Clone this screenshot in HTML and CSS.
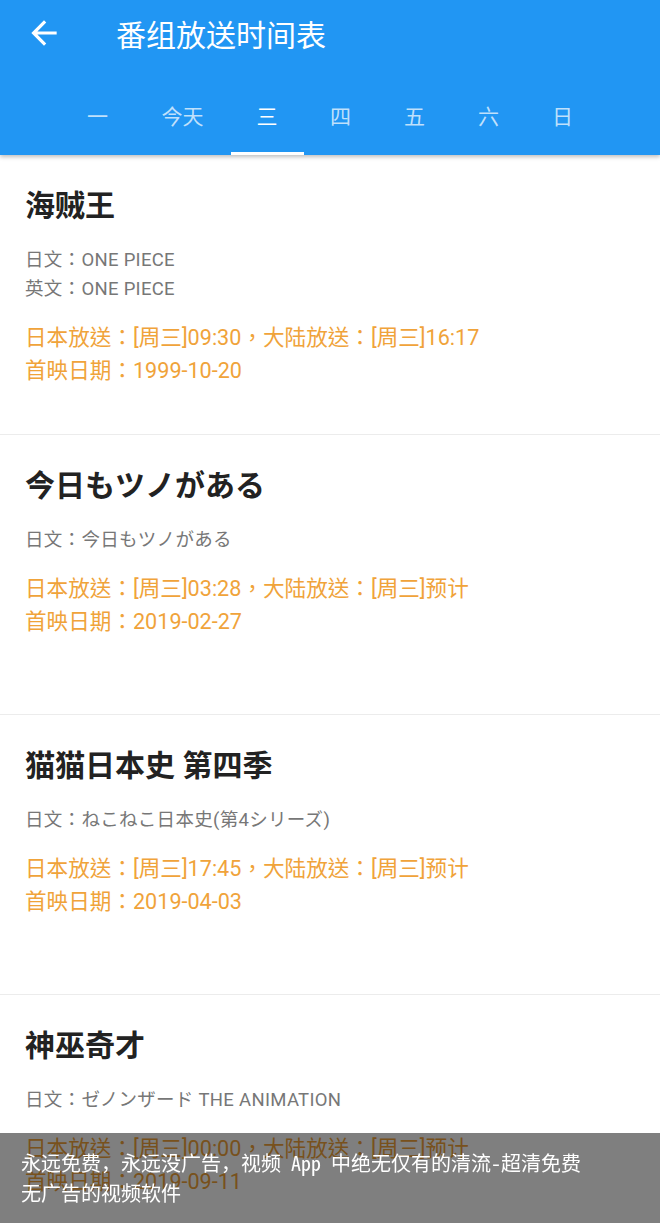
FILE: index.html
```html
<!DOCTYPE HTML>
<html>
<head>
<meta charset="utf-8">
<title>番组放送时间表</title>
<link rel="stylesheet" href="styles.css">
</head>
<body>

<div id="top_bar">
	<div class="toolbar">
		<svg class="back_icon" viewBox="0 0 24 24" width="38" height="38"><path fill="#ffffff" d="M20 11H7.830l5.590-5.590L12 4l-8 8 8 8 1.410-1.410L7.830 13H20v-2z"/></svg>
		<p class="toolbar_title">番组放送时间表</p>
	</div>
	<div class="tabs">
		<div class="tab">一</div>
		<div class="tab tab_wide">今天</div>
		<div class="tab tab_selected">三</div>
		<div class="tab">四</div>
		<div class="tab">五</div>
		<div class="tab">六</div>
		<div class="tab">日</div>
	</div>
</div>

<div id="list">
	<div class="show">
		<h2 class="show_title">海贼王</h2>
		<div class="show_names">
			<p>日文：ONE PIECE</p>
			<p>英文：ONE PIECE</p>
		</div>
		<div class="show_times">
			<p>日本放送：[周三]09:30，大陆放送：[周三]16:17</p>
			<p>首映日期：1999-10-20</p>
		</div>
	</div>
	<div class="show">
		<h2 class="show_title">今日もツノがある</h2>
		<div class="show_names">
			<p>日文：今日もツノがある</p>
		</div>
		<div class="show_times">
			<p>日本放送：[周三]03:28，大陆放送：[周三]预计</p>
			<p>首映日期：2019-02-27</p>
		</div>
	</div>
	<div class="show">
		<h2 class="show_title">猫猫日本史 第四季</h2>
		<div class="show_names">
			<p>日文：ねこねこ日本史(第4シリーズ)</p>
		</div>
		<div class="show_times">
			<p>日本放送：[周三]17:45，大陆放送：[周三]预计</p>
			<p>首映日期：2019-04-03</p>
		</div>
	</div>
	<div class="show">
		<h2 class="show_title">神巫奇才</h2>
		<div class="show_names">
			<p>日文：ゼノンザード THE ANIMATION</p>
		</div>
		<div class="show_times">
			<p>日本放送：[周三]00:00，大陆放送：[周三]预计</p>
			<p>首映日期：2019-09-11</p>
		</div>
	</div>
</div>

<div id="notice">永远免费，永远没广告，视频 App 中绝无仅有的清流-超清免费无广告的视频软件</div>

</body>
</html>
```

FILE: styles.css
```css
html {
	background-color:#ffffff;
	font-family:Roboto, "Noto Sans CJK TC", sans-serif;
}
body {
	margin:0;
}
p {
	margin:0;
}
#top_bar {
	position:relative;
	z-index:2;
	background-color:#2196f3;
	height:155px;
	box-shadow:0 2px 4px rgba(0,0,0,0.25);
}
.toolbar {
	display:flex;
	align-items:center;
	height:68px;
}
.back_icon {
	margin-left:25px;
	margin-top:-2px;
}
.toolbar_title {
	color:#ffffff;
	font-size:30px;
	margin-left:53px;
	margin-top:-2px;
	font-family:"Noto Sans CJK SC", sans-serif;
}
.tabs {
	display:flex;
	justify-content:center;
	height:87px;
}
.tab {
	width:74px;
	display:flex;
	align-items:center;
	justify-content:center;
	padding-top:9px;
	box-sizing:border-box;
	font-size:21px;
	color:rgba(255,255,255,0.72);
	border-bottom:3px solid transparent;
}
.tab_wide {
	width:96px;
}
.tab_selected {
	width:73px;
	color:#ffffff;
	border-bottom-color:#ffffff;
}
.show {
	height:280px;
	box-sizing:border-box;
	border-bottom:1px solid #ececec;
	padding:30px 25px 0 25px;
}
.show_title {
	margin:0;
	font-size:30px;
	line-height:42px;
	font-weight:bold;
	color:#222222;
}
.show_names {
	margin-top:19px;
	font-size:18.5px;
	letter-spacing:0.3px;
	line-height:29px;
	color:#777777;
}
.show_times {
	margin-top:17px;
	font-size:21.6px;
	line-height:33px;
	color:#f0a33a;
}
#notice {
	position:fixed;
	left:0;
	right:0;
	bottom:0;
	height:90px;
	box-sizing:border-box;
	padding:15px 75px 0 21px;
	background-color:rgba(0,0,0,0.5);
	color:#ffffff;
	font-family:"Noto Sans Mono CJK SC", "Noto Sans CJK SC", monospace;
	font-size:20px;
	line-height:30px;
}
```
